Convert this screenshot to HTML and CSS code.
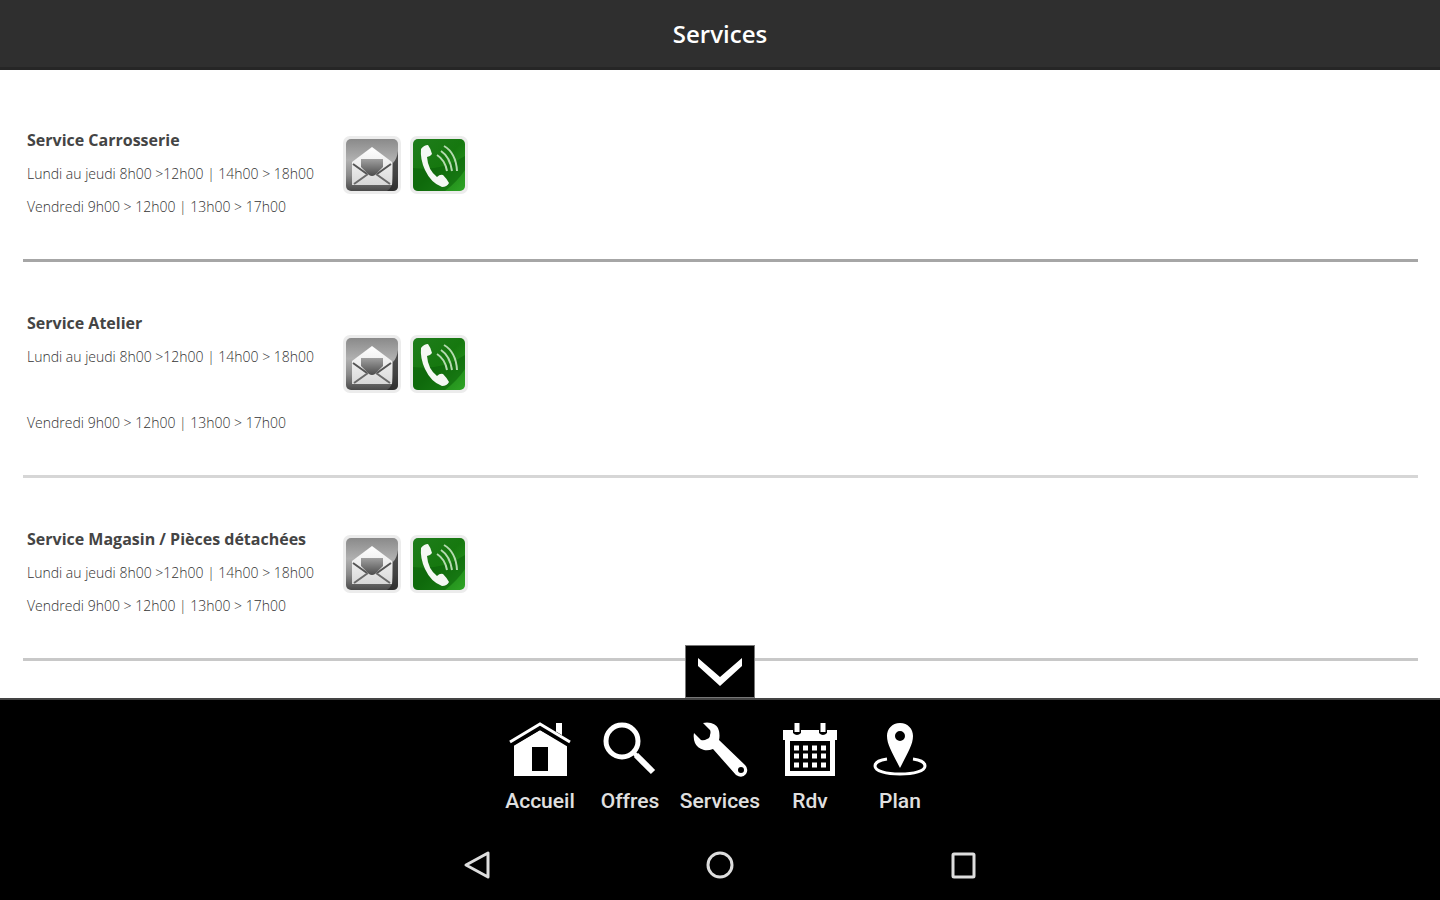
FILE: index.html
```html
<!DOCTYPE html>
<html lang="fr">
<head>
    <meta charset="UTF-8">
    <meta name="viewport" content="width=device-width, initial-scale=1.0">
    <title>Services</title>
    <link rel="stylesheet" href="styles.css">
</head>
<body>
    <!-- shared contact icons -->
    <svg class="sprite" width="0" height="0" aria-hidden="true">
        <defs>
            <linearGradient id="grey" x1="0" y1="0" x2="0" y2="1">
                <stop offset="0" stop-color="#8a8a8a"/>
                <stop offset="0.4" stop-color="#b0b0b0"/>
                <stop offset="0.7" stop-color="#8a8a8a"/>
                <stop offset="1" stop-color="#4a4a4a"/>
            </linearGradient>
            <linearGradient id="paper" x1="0" y1="0" x2="0" y2="1">
                <stop offset="0" stop-color="#ffffff"/>
                <stop offset="1" stop-color="#d8d8d8"/>
            </linearGradient>
            <linearGradient id="letter" x1="0" y1="0" x2="0" y2="1">
                <stop offset="0" stop-color="#a0a0a0"/>
                <stop offset="1" stop-color="#4c4c4c"/>
            </linearGradient>
            <linearGradient id="green" x1="0" y1="0" x2="1" y2="1">
                <stop offset="0" stop-color="#1f7d1c"/>
                <stop offset="0.5" stop-color="#16780f"/>
                <stop offset="1" stop-color="#2fa526"/>
            </linearGradient>
            <symbol id="mail" viewBox="0 0 58 58">
                <rect x="0" y="0" width="58" height="58" rx="7" fill="#ececec"/>
                <rect x="3" y="3" width="52" height="52" rx="5" fill="url(#grey)"/>
                <path d="M55 15v35q0 5-5 5h-6q6-4 6-12V27q4-4 5-12z" fill="#222" opacity="0.7"/>
                <path d="M9 26 29 11l20 15v23H9z" fill="url(#paper)"/>
                <path d="M18 23h22v8l-8 8q-3 2-6 0l-8-8z" fill="url(#letter)"/>
                <path d="M10 28l14 10M48 28 34 38" fill="none" stroke="#555" stroke-width="2"/>
                <path d="M11 48l14-10M47 48 33 38" fill="none" stroke="#6a6a6a" stroke-width="2"/>
            </symbol>
            <symbol id="phone" viewBox="0 0 58 58">
                <rect x="0" y="0" width="58" height="58" rx="7" fill="#ececec"/>
                <rect x="3" y="3" width="52" height="52" rx="5" fill="url(#green)"/>
                <path d="M3 32q28 4 52-12v14q-8 12-20 21H8q-5 0-5-5z" fill="#075c08" opacity="0.5"/>
                <path d="M11 13q3-4 7-4 3 4 4 9-2 3-5 3 1 13 10 20 3-3 6-2 4 4 6 8-2 4-7 4-11-4-17-17-5-11-4-21z" fill="#f4f8f4"/>
                <path d="M27 19q8 5 10 16M31 15q9 6 11 20M34 10q12 7 13 25" fill="none" stroke="#b5dab0" stroke-width="2"/>
            </symbol>
        </defs>
    </svg>

    <header class="header">
        <h1>Services</h1>
    </header>

    <main class="content">
        <section class="service dark">
            <div class="hours">
                <h2>Service Carrosserie</h2>
                <p>Lundi au jeudi 8h00 &gt;12h00 | 14h00 &gt; 18h00</p>
                <p>Vendredi 9h00 &gt; 12h00 | 13h00 &gt; 17h00</p>
            </div>
            <div class="contact">
                <a href="#" aria-label="Email"><svg><use href="#mail"/></svg></a>
                <a href="#" aria-label="Appeler"><svg><use href="#phone"/></svg></a>
            </div>
        </section>

        <section class="service light">
            <div class="hours">
                <h2>Service Atelier</h2>
                <p>Lundi au jeudi 8h00 &gt;12h00 | 14h00 &gt; 18h00</p>
                <p><br>Vendredi 9h00 &gt; 12h00 | 13h00 &gt; 17h00</p>
            </div>
            <div class="contact">
                <a href="#" aria-label="Email"><svg><use href="#mail"/></svg></a>
                <a href="#" aria-label="Appeler"><svg><use href="#phone"/></svg></a>
            </div>
        </section>

        <section class="service">
            <div class="hours">
                <h2>Service Magasin / Pièces détachées</h2>
                <p>Lundi au jeudi 8h00 &gt;12h00 | 14h00 &gt; 18h00</p>
                <p>Vendredi 9h00 &gt; 12h00 | 13h00 &gt; 17h00</p>
            </div>
            <div class="contact">
                <a href="#" aria-label="Email"><svg><use href="#mail"/></svg></a>
                <a href="#" aria-label="Appeler"><svg><use href="#phone"/></svg></a>
            </div>
        </section>
    </main>

    <footer class="footer">
        <button class="toggle" type="button" aria-label="Masquer le menu">
            <svg width="48" height="32" viewBox="0 0 48 32"><path d="M2 2v8l22 20L46 10V2L24 21z" fill="#fff"/></svg>
        </button>

        <nav class="menu">
            <a href="#">
                <svg viewBox="0 0 62 56" width="62" height="56">
                    <path d="M47 1h6v19l-6-4z" fill="#fff"/>
                    <path d="M31 8 58 23v31H5V23z" fill="#fff"/>
                    <path d="M1 22 31 4l30 18" fill="none" stroke="#000" stroke-width="7"/>
                    <path d="M1 20 31 2l30 18" fill="none" stroke="#fff" stroke-width="3"/>
                    <path d="M23 25h16v24H23z" fill="#000"/>
                </svg>
                <span>Accueil</span>
            </a>
            <a href="#">
                <svg viewBox="0 0 54 56" width="54" height="56">
                    <circle cx="19" cy="19" r="16" fill="none" stroke="#fff" stroke-width="5"/>
                    <path d="M30 30l6 6" stroke="#fff" stroke-width="4"/>
                    <path d="M33 33l17 17" stroke="#fff" stroke-width="6"/>
                </svg>
                <span>Offres</span>
            </a>
            <a href="#">
                <svg viewBox="0 0 56 56" width="56" height="56">
                    <path fill-rule="evenodd" d="M11 1q4-1 8 0 7 2 8 8 1 5 0 9l26 25q4 4 1 9-4 5-10 1L21 27q-5 2-9 1-7-2-9-7-2-5-1-10l7 7q3 1 6-1 3-1 3-4 1-3 0-5zM49 45a3 3 0 1 0 0 6 3 3 0 0 0 0-6z" fill="#fff"/>
                </svg>
                <span>Services</span>
            </a>
            <a href="#">
                <svg viewBox="0 0 54 56" width="54" height="56">
                    <path d="M0 8h54v10h-2v36H2V18H0z" fill="#fff"/>
                    <path d="M7 19h40v30H7z" fill="#000"/>
                    <path d="M10 6h8v5q-4 4-8 0zM36 6h8v5q-4 4-8 0z" fill="#000"/>
                    <path d="M14 1v9M40 1v9" stroke="#fff" stroke-width="5"/>
                    <path d="M11 26h32M11 34h32M11 43h32" stroke="#fff" stroke-width="5" stroke-dasharray="5 4 5 4 5 4 5 9"/>
                </svg>
                <span>Rdv</span>
            </a>
            <a href="#">
                <svg viewBox="0 0 54 56" width="54" height="56">
                    <path fill-rule="evenodd" d="M27 1c8 0 13 6 13 13 0 9-6 18-13 32-7-14-13-23-13-32C14 7 19 1 27 1zM27 9a5 5 0 1 0 0 10 5 5 0 0 0 0-10z" fill="#fff"/>
                    <path d="M14 37C6 38 2 41 2 44c0 5 11 8 25 8s25-3 25-8c0-3-4-6-12-7" fill="none" stroke="#fff" stroke-width="3"/>
                </svg>
                <span>Plan</span>
            </a>
        </nav>

        <div class="system">
            <button type="button" aria-label="Retour">
                <svg viewBox="0 0 28 30" width="28" height="30"><path d="M3 15 25 3v24z" fill="none" stroke="#ddd" stroke-width="3" stroke-linejoin="round"/></svg>
            </button>
            <button type="button" aria-label="Accueil">
                <svg viewBox="0 0 28 30" width="28" height="30"><circle cx="14" cy="15" r="12" fill="none" stroke="#ddd" stroke-width="3"/></svg>
            </button>
            <button type="button" aria-label="Applications">
                <svg viewBox="0 0 28 30" width="28" height="30"><rect x="4" y="4" width="21" height="23" rx="1" fill="none" stroke="#ddd" stroke-width="3"/></svg>
            </button>
        </div>
    </footer>
</body>
</html>
```
FILE: styles.css
```css
* {
    box-sizing: border-box;
}
body {
    margin: 0;
    min-height: 100vh;
    display: flex;
    flex-direction: column;
    font-family: "Open Sans", sans-serif;
    background-color: #fff;
}
.sprite {
    position: absolute;
}
.header {
    height: 70px;
    display: flex;
    align-items: center;
    justify-content: center;
    background-color: #2f2f2f;
    border-bottom: 3px solid #262626;
}
.header h1 {
    margin: 0;
    font-size: 24px;
    font-weight: 600;
    color: #fff;
}
.content {
    flex: 1;
    padding: 9px 22px 0 23px;
}
.service {
    display: grid;
    grid-template-columns: 316px auto;
    align-items: center;
    padding: 45px 4px 36px;
    border-bottom: 3px solid #c8c8c8;
}
.service.dark {
    border-color: #a6a6a6;
}
.service.light {
    border-color: #d6d6d6;
}
.hours h2,
.hours p {
    margin: 0;
    font-size: 14px;
    line-height: 33px;
}
.hours h2 {
    font-size: 16px;
    font-weight: 700;
    color: #444;
}
.hours p {
    font-weight: 300;
    color: #333;
}
.contact {
    display: flex;
    gap: 9px;
    padding-bottom: 18px;
}
.contact a,
.contact svg {
    display: block;
    width: 58px;
    height: 58px;
}
.footer {
    position: relative;
    padding-bottom: 20px;
    background-color: #000;
    border-top: 2px solid #444;
}
.toggle {
    position: absolute;
    bottom: 100%;
    left: 50%;
    transform: translateX(-50%);
    display: flex;
    align-items: center;
    justify-content: center;
    width: 70px;
    height: 53px;
    margin-bottom: 2px;
    padding: 0;
    background-color: #000;
    border: 1px solid #777;
}
.menu {
    display: grid;
    grid-template-columns: repeat(5, 90px);
    justify-content: center;
    padding-top: 22px;
}
.menu a {
    display: flex;
    flex-direction: column;
    align-items: center;
    gap: 9px;
    font-family: Roboto, sans-serif;
    font-size: 21px;
    font-weight: 500;
    line-height: 28px;
    color: #e0e0e0;
    text-decoration: none;
}
.system {
    display: grid;
    grid-template-columns: repeat(3, 243px);
    justify-content: center;
    justify-items: center;
    padding-top: 35px;
}
.system button {
    display: flex;
    padding: 0;
    background: none;
    border: none;
}
```
